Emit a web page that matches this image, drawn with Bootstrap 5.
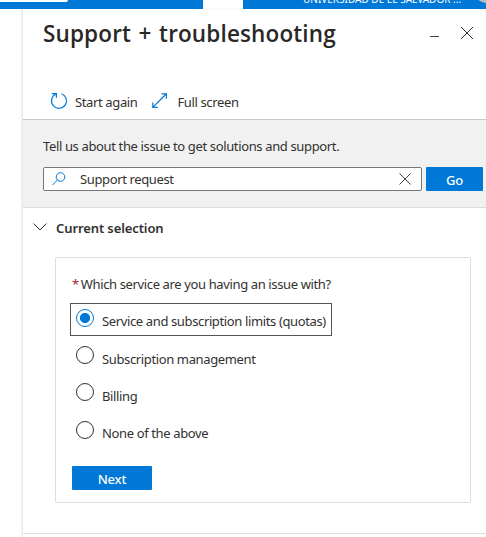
<!DOCTYPE html>
<html lang="en">
<head>
<meta charset="utf-8">
<meta name="viewport" content="width=device-width, initial-scale=1">
<title>Support + troubleshooting</title>
<link rel="stylesheet" href="https://cdn.jsdelivr.net/npm/bootstrap@5.3.0/dist/css/bootstrap.min.css">
<style>
body{font-family:"Noto Sans","Open Sans",sans-serif;font-size:13px;line-height:18px;letter-spacing:-.37px;color:#323130;height:537px;overflow:hidden;white-space:nowrap}
svg{display:block;flex:none;fill:none}
.portal-bar{height:9px;overflow:hidden}
.azure{background:#0078d7}
.bar-left{width:203px;flex:none}
.bar-search{width:68px;height:2px;border-bottom-right-radius:2px}
.bar-right{margin-left:40px;height:9px;padding-left:60px}
.tenant{font-size:10px;line-height:14px;margin-top:-8px;letter-spacing:0;width:160px}
.avatar{width:28px;height:28px;margin:-25px 0 0 10px;background:#b8bcc0}
.blade{margin-left:22px;height:528px;border-left:1px solid #e9e9e9;box-shadow:-1px 0 2px #eee}
.blade-head{height:83px;padding:9px 12px 0 20px}
.blade-title{font-family:"Open Sans","Noto Sans",sans-serif;font-size:22.5px;line-height:32px;font-weight:600;letter-spacing:.15px;word-spacing:1.5px;color:#292827}
.toolbar{height:28px;padding-left:27px;border-bottom:1px solid #c8c8c8}
.toolbar span{padding-top:1px;margin-left:7px}
.toolbar .expand{margin-left:15px}
.ask{height:88px;background:#f1f1f1;border-bottom:1px solid #dcdcdc;padding:17px 3px 0 20px}
.prompt-line{margin-bottom:12px;letter-spacing:-.36px}
.query{height:24px;width:379px;border:1px solid #777;border-radius:2px;padding:0 10px 0 8px}
.query span{padding:0 0 0 14px}
.blue-btn{background:#0078d7;color:#fff;font-size:13px;font-weight:500;line-height:24px;height:24px;padding:1px 0 0;border:0;border-radius:1px;letter-spacing:-.2px}
.blue-btn:hover{background:#106ebe;color:#fff}
.go{width:57px}
.next{width:80px;margin:14px 0 0 2px}
.section-title{font-weight:600;height:49px;padding:11px 0 0 10px;letter-spacing:-.1px}
.section-title span{margin:0 0 0 9px}
.question{width:416px;height:246px;margin-left:32px;border:1px solid #dedede;border-radius:2px;padding:17px 0 0 14px}
.ask-line{padding-left:2px;margin-bottom:10px}
.req{color:#a4262c;margin-right:-1px}
.choice{height:37.3px;padding:5px 5px 0;border:1px solid transparent}
.choice.picked{width:262px;height:33px;border-color:#555;margin-bottom:4px}
.choice .form-check-input{width:18px;height:18px;margin:0;border:1px solid #323130;box-shadow:none;background-image:none;flex:none}
.choice .form-check-input:checked{border-color:#0078d7;background:#fff radial-gradient(circle,#0078d7 4.7px,transparent 5.4px)}
.choice label{margin:4px 0 0 8px}
.choice.picked label,.choice:nth-last-of-type(1) label{margin-top:3px}
.rule{border-top:1px solid #dedede;margin-top:30px}
</style>
</head>
<body class="bg-white">
<header class="portal-bar d-flex">
  <div class="bar-left azure"><div class="bar-search bg-white"></div></div>
  <div class="bar-right azure flex-grow-1 d-flex text-white align-items-start"><span class="tenant flex-shrink-0">UNIVERSIDAD DE EL SALVADOR ...</span><span class="avatar rounded-circle flex-shrink-0"></span></div>
</header>
<main class="blade">
  <div class="blade-head d-flex justify-content-between">
    <h1 class="blade-title mb-0"><span>Support + troubleshooting</span></h1>
    <div class="d-flex">
      <svg width="12" height="30" stroke="#444"><path d="M0 18.500h9"/></svg>
      <svg class="ms-3" width="16" height="30" stroke="#333"><path d="M3 9l12 12M15 9L3 21"/></svg>
    </div>
  </div>
  <div class="toolbar d-flex">
    <svg width="18" height="18" stroke="#0078d7" stroke-width="1.2"><path d="M11.500 1.700A7.500 7.500 0 1 1 5.400 2.200M1.800 1.600h4.600v4.200"/></svg>
    <span>Start again</span>
    <svg class="expand" width="18" height="18" stroke="#0078d7" stroke-width="1.2"><path d="M1 15.200L14.200 2M9.500 1.800h4.900v4.900M5.700 15.400H.8v-4.900"/></svg>
    <span>Full screen</span>
  </div>
  <section class="ask">
    <div class="prompt-line"><span>Tell us about the issue to get solutions and support.</span></div>
    <div class="d-flex gap-1">
      <div class="query bg-white d-flex align-items-center">
        <svg width="14" height="14" stroke="#0078d7"><circle cx="8.500" cy="5" r="4.300"/><path d="M5.500 8L.5 13"/></svg>
        <span class="flex-grow-1">Support request</span>
        <svg width="12" height="12" stroke="#444"><path d="M.5.5l11 11M11.500.5l-11 11"/></svg>
      </div>
      <button class="btn blue-btn go" type="button">Go</button>
    </div>
  </section>
  <div class="section-title d-flex">
    <svg width="14" height="18" stroke="#333"><path d="M.5 4.500L7 11l6.500-6.500"/></svg>
    <span>Current selection</span>
  </div>
  <form class="question">
    <div class="ask-line"><span class="req">*</span> <span>Which service are you having an issue with?</span></div>
    <div class="choice picked d-flex"><input class="form-check-input" type="radio" name="service" id="s1" checked><label for="s1">Service and subscription limits (quotas)</label></div>
    <div class="choice d-flex"><input class="form-check-input" type="radio" name="service" id="s2"><label for="s2">Subscription management</label></div>
    <div class="choice d-flex"><input class="form-check-input" type="radio" name="service" id="s3"><label for="s3">Billing</label></div>
    <div class="choice d-flex"><input class="form-check-input" type="radio" name="service" id="s4"><label for="s4">None of the above</label></div>
    <button class="btn blue-btn next d-block" type="button">Next</button>
  </form>
  <div class="rule"></div>
</main>
<script src="https://cdn.jsdelivr.net/npm/bootstrap@5.3.0/dist/js/bootstrap.bundle.min.js"></script>
</body>
</html>
